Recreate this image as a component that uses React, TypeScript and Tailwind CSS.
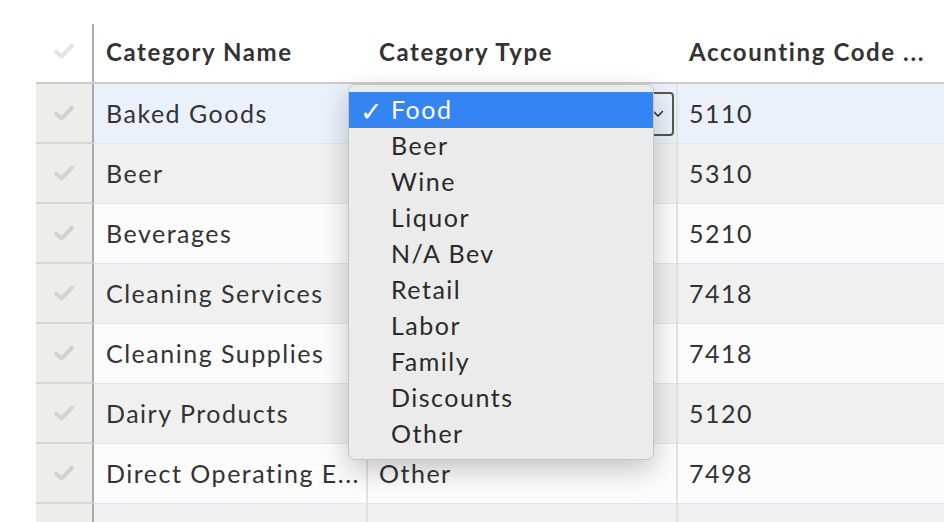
import React from 'react';

const rows = [
  { name: 'Baked Goods', type: '', code: '5110' },
  { name: 'Beer', type: '', code: '5310' },
  { name: 'Beverages', type: '', code: '5210' },
  { name: 'Cleaning Services', type: '', code: '7418' },
  { name: 'Cleaning Supplies', type: '', code: '7418' },
  { name: 'Dairy Products', type: '', code: '5120' },
  { name: 'Direct Operating E...', type: 'Other', code: '7498' },
  { name: '', type: '', code: '' },
];

const options = ['Food', 'Beer', 'Wine', 'Liquor', 'N/A Bev', 'Retail', 'Labor', 'Family', 'Discounts', 'Other'];

function Check({ color }: { color: string }) {
  return (
    <svg width="22" height="18" viewBox="0 0 22 18" fill="none">
      <path d="M3 9.5 L8.5 14.5 L19 3.5" stroke={color} strokeWidth="4" strokeLinecap="round" strokeLinejoin="round" />
    </svg>
  );
}

function rowBg(i: number) {
  if (i === 0) return 'bg-[#eaf1fa]';
  return i % 2 === 1 ? 'bg-[#f0f0f0]' : 'bg-[#fcfcfc]';
}

export default function App() {
  return (
    <div
      className="relative w-[944px] h-[522px] overflow-hidden bg-white text-[#333333]"
      style={{ fontFamily: 'Lato, "Noto Sans", sans-serif' }}
    >
      <div className="pl-[36px] pt-[24px]">
        {/* Header */}
        <div className="flex h-[60px] border-b-2 border-[#cccccc]">
          <div className="w-[58px] flex items-center justify-center pb-[4px] border-r-2 border-[#a9a9a9]">
            <Check color="#e4e4e4" />
          </div>
          <div className="w-[274px] flex items-center pl-[12px] pb-[2px] text-[24px] font-bold tracking-[1.6px]">Category Name</div>
          <div className="w-[310px] flex items-center pl-[11px] pb-[2px] text-[24px] font-bold tracking-[1.6px]">Category Type</div>
          <div className="flex-1 flex items-center pl-[11px] pb-[2px] text-[24px] font-bold tracking-[1.6px] whitespace-nowrap">Accounting Code ...</div>
        </div>

        {/* Rows */}
        {rows.map((r, i) => (
          <div key={i} className="flex h-[60px]">
            <div className="w-[58px] flex items-center justify-center bg-[#ededeb] border-r-2 border-[#a9a9a9] border-b-2 border-b-[#d6d6d6]">
              <Check color="#d2d2d2" />
            </div>
            <div className={`flex flex-1 border-b border-[#e1e4e8] text-[25px] tracking-[1.5px] ${rowBg(i)}`}>
              <div className="w-[274px] flex items-center pl-[12px] pt-[1px] border-r-2 border-[#e2e2e2] whitespace-nowrap">
                {r.name}
              </div>
              <div className="w-[310px] flex items-center pl-[11px] pt-[1px] border-r-2 border-[#e2e2e2]">
                {i === 0 ? (
                  <div className="ml-[-6px] w-[301px] h-[44px] flex items-center justify-end pr-[8px] border-2 border-[#555555] rounded-[4px]">
                    <svg width="12" height="8" viewBox="0 0 12 8" fill="none">
                      <path d="M1.5 1.5 L6 6 L10.5 1.5" stroke="#333" strokeWidth="1.6" strokeLinecap="round" strokeLinejoin="round" />
                    </svg>
                  </div>
                ) : (
                  r.type
                )}
              </div>
              <div className="flex-1 flex items-center pl-[11px] pt-[1px]">{r.code}</div>
            </div>
          </div>
        ))}
      </div>

      {/* Open select menu */}
      <div className="absolute left-[348px] top-[84px] w-[306px] h-[376px] pt-[7px] rounded-[7px] bg-[#ebebeb] border border-[#c4c4c4] shadow-[0_10px_28px_rgba(0,0,0,0.22)]">
        {options.map((o, i) => (
          <div
            key={o}
            className={`h-[36px] flex items-center text-[25px] tracking-[1.5px] ${i === 0 ? 'bg-[#3584f4] text-white' : 'text-[#2a2a2a]'}`}
          >
            <span className="w-[42px] pl-[11px] text-[27px] leading-none tracking-normal">{i === 0 ? '✓' : ''}</span>
            {o}
          </div>
        ))}
      </div>
    </div>
  );
}
